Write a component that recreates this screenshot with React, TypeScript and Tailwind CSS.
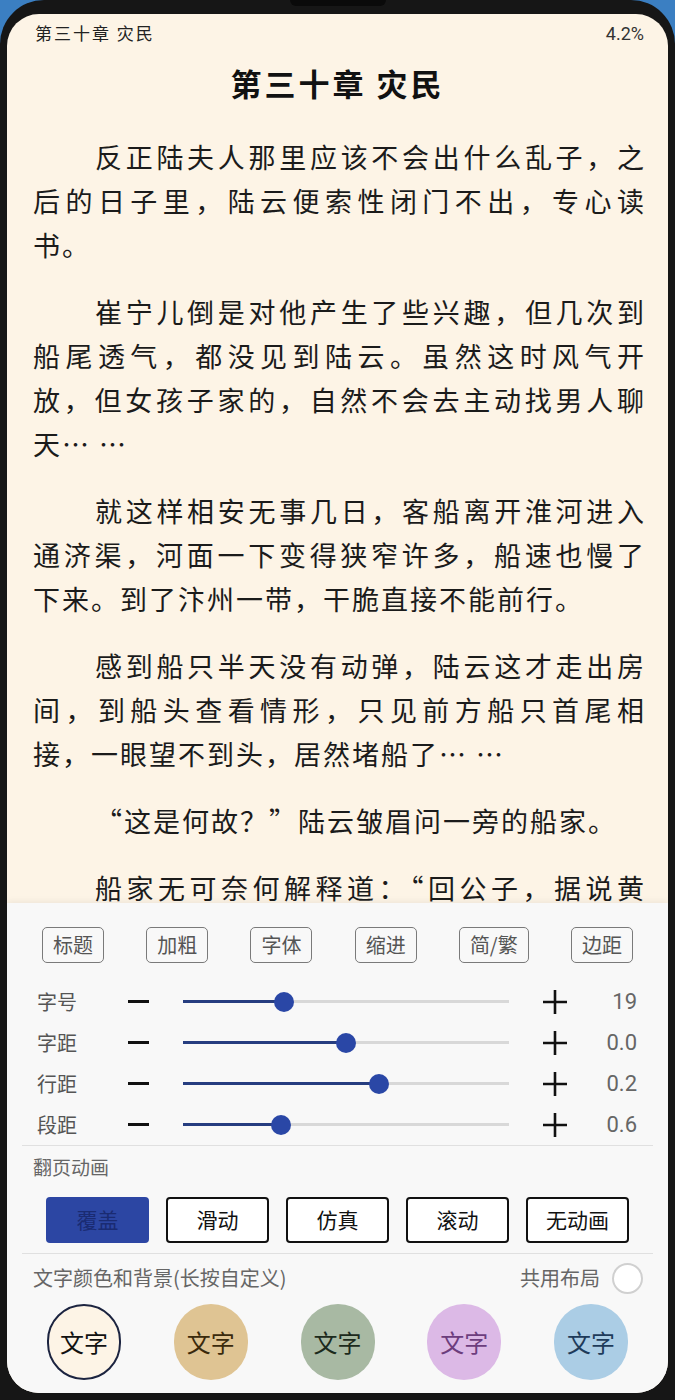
import React from "react";

type Line = { t: string; indent?: boolean; full?: boolean };

const paragraphs: Line[][] = [
  [
    { t: "反正陆夫人那里应该不会出什么乱子，之", indent: true, full: true },
    { t: "后的日子里，陆云便索性闭门不出，专心读", full: true },
    { t: "书。" },
  ],
  [
    { t: "崔宁儿倒是对他产生了些兴趣，但几次到", indent: true, full: true },
    { t: "船尾透气，都没见到陆云。虽然这时风气开", full: true },
    { t: "放，但女孩子家的，自然不会去主动找男人聊", full: true },
    { t: "天… …" },
  ],
  [
    { t: "就这样相安无事几日，客船离开淮河进入", indent: true, full: true },
    { t: "通济渠，河面一下变得狭窄许多，船速也慢了", full: true },
    { t: "下来。到了汴州一带，干脆直接不能前行。" },
  ],
  [
    { t: "感到船只半天没有动弹，陆云这才走出房", indent: true, full: true },
    { t: "间，到船头查看情形，只见前方船只首尾相", full: true },
    { t: "接，一眼望不到头，居然堵船了… …" },
  ],
  [{ t: "“这是何故？”陆云皱眉问一旁的船家。", indent: true }],
  [{ t: "船家无可奈何解释道：“回公子，据说黄", indent: true, full: true }],
];

const sliders = [
  { label: "字号", pct: 31, value: "19" },
  { label: "字距", pct: 50, value: "0.0" },
  { label: "行距", pct: 60, value: "0.2" },
  { label: "段距", pct: 30, value: "0.6" },
];

const topButtons = ["标题", "加粗", "字体", "缩进", "简/繁", "边距"];
const flipButtons = ["覆盖", "滑动", "仿真", "滚动", "无动画"];

const swatches = [
  { bg: "bg-[#fdf4e6]", fg: "text-[#111111]", border: "border-2 border-[#1c2440]" },
  { bg: "bg-[#dfc493]", fg: "text-[#3a2a0c]", border: "" },
  { bg: "bg-[#a8b9a3]", fg: "text-[#1c2a1c]", border: "" },
  { bg: "bg-[#dcb9e6]", fg: "text-[#6c3d7d]", border: "" },
  { bg: "bg-[#abcde5]", fg: "text-[#1e3b5a]", border: "" },
];

const CJK = "font-['Noto_Sans_CJK_SC',sans-serif]";

export default function App() {
  return (
    <div className="w-[675px] h-[1400px] bg-[#3b7fc2] overflow-hidden">
      <div className="w-full h-full rounded-t-[44px] bg-[#161616] pt-[14px] px-[7px] relative">
        <div className="absolute top-0 left-[290px] w-[96px] h-[6px] rounded-b-[6px] bg-[#0a0a0a]" />
        <div className={`relative h-[1379px] rounded-[32px] overflow-hidden bg-[#fdf4e6] ${CJK}`}>
          {/* status line */}
          <div className="h-[38px] flex items-center justify-between pl-[28px] pr-[24px] text-[#222]">
            <span className="text-[17px] tracking-[2px]">第三十章 灾民</span>
            <span className="font-['Roboto',sans-serif] text-[18px] text-[#333]">4.2%</span>
          </div>
          {/* title */}
          <div className="h-[60px] flex items-center justify-center">
            <span className="text-[31px] font-bold text-[#111] tracking-[3px] leading-none">第三十章 灾民</span>
          </div>
          {/* body */}
          <div className="mt-[23px] pl-[26px] pr-[24px] text-[27px] text-[#1b1b1b] leading-[44px] tracking-[2px] flex flex-col gap-[23px]">
            {paragraphs.map((p, i) => (
              <div key={i}>
                {p.map((l, j) => (
                  <div
                    key={j}
                    className={`whitespace-nowrap ${l.indent ? "pl-[62px]" : ""} ${
                      l.full ? "text-justify [text-align-last:justify] tracking-normal" : ""
                    }`}
                  >
                    {l.t}
                  </div>
                ))}
              </div>
            ))}
          </div>

          {/* settings panel */}
          <div className="absolute left-0 right-0 bottom-0 top-[889px] bg-[#f8f8f8] shadow-[0_-2px_6px_rgba(0,0,0,0.06)]">
            <div className="mt-[24px] flex justify-between px-[35px]">
              {topButtons.map((b) => (
                <div
                  key={b}
                  className="h-[36px] px-[10px] flex items-center justify-center border border-[#7a7a7a] rounded-[5px] text-[20px] text-[#555] leading-none"
                >
                  {b}
                </div>
              ))}
            </div>

            <div className="mt-[18px] flex flex-col">
              {sliders.map((s) => (
                <div key={s.label} className="h-[41px] flex items-center pl-[30px]">
                  <div className="w-[91px] text-[20px] text-[#555]">{s.label}</div>
                  <div className="w-[21px] h-[3px] bg-[#111]" />
                  <div className="w-[34px]" />
                  <div className="relative w-[326px] h-[3px] bg-[#d8d8d8]">
                    <div className="absolute left-0 top-0 h-[3px] bg-[#263d80]" style={{ width: `${s.pct}%` }} />
                    <div
                      className="absolute top-1/2 w-[20px] h-[20px] -mt-[10px] -ml-[10px] rounded-full bg-[#2a47a6]"
                      style={{ left: `${s.pct}%` }}
                    />
                  </div>
                  <div className="w-[34px]" />
                  <svg width="24" height="24" viewBox="0 0 24 24">
                    <path d="M12 0V24M0 12H24" stroke="#111" strokeWidth="2.6" />
                  </svg>
                  <div className="w-[70px] text-right font-['Roboto',sans-serif] text-[22px] text-[#666]">{s.value}</div>
                </div>
              ))}
            </div>

            <div className="mx-[15px] border-t border-[#e0e0e0]" />

            <div className="mt-[9px] pl-[26px] h-[24px] flex items-center text-[19px] text-[#666]">翻页动画</div>

            <div className="mt-[18px] flex gap-[17px] pl-[39px]">
              {flipButtons.map((b, i) =>
                i === 0 ? (
                  <div
                    key={b}
                    className="w-[103px] h-[46px] rounded-[4px] bg-[#2c46a3] flex items-center justify-center text-[21px] text-[#1a2b72]"
                  >
                    {b}
                  </div>
                ) : (
                  <div
                    key={b}
                    className="w-[103px] h-[46px] rounded-[4px] bg-white border-[2.5px] border-[#111] flex items-center justify-center text-[21px] text-[#111]"
                  >
                    {b}
                  </div>
                )
              )}
            </div>

            <div className="mt-[10px] mx-[15px] border-t border-[#e0e0e0]" />

            <div className="mt-[9px] h-[30px] flex items-center justify-between pl-[26px] pr-[25px]">
              <span className="text-[20px] text-[#666]">文字颜色和背景(长按自定义)</span>
              <div className="flex items-center gap-[12px]">
                <span className="text-[20px] text-[#666]">共用布局</span>
                <div className="w-[31px] h-[31px] rounded-full border-[2.5px] border-[#d0d0d0] bg-white" />
              </div>
            </div>

            <div className="mt-[11px] flex justify-between px-[40px]">
              {swatches.map((s, i) => (
                <div
                  key={i}
                  className={`w-[74px] h-[76px] rounded-full flex items-center justify-center text-[24px] ${s.bg} ${s.fg} ${s.border}`}
                >
                  文字
                </div>
              ))}
            </div>
          </div>
        </div>
      </div>
    </div>
  );
}
